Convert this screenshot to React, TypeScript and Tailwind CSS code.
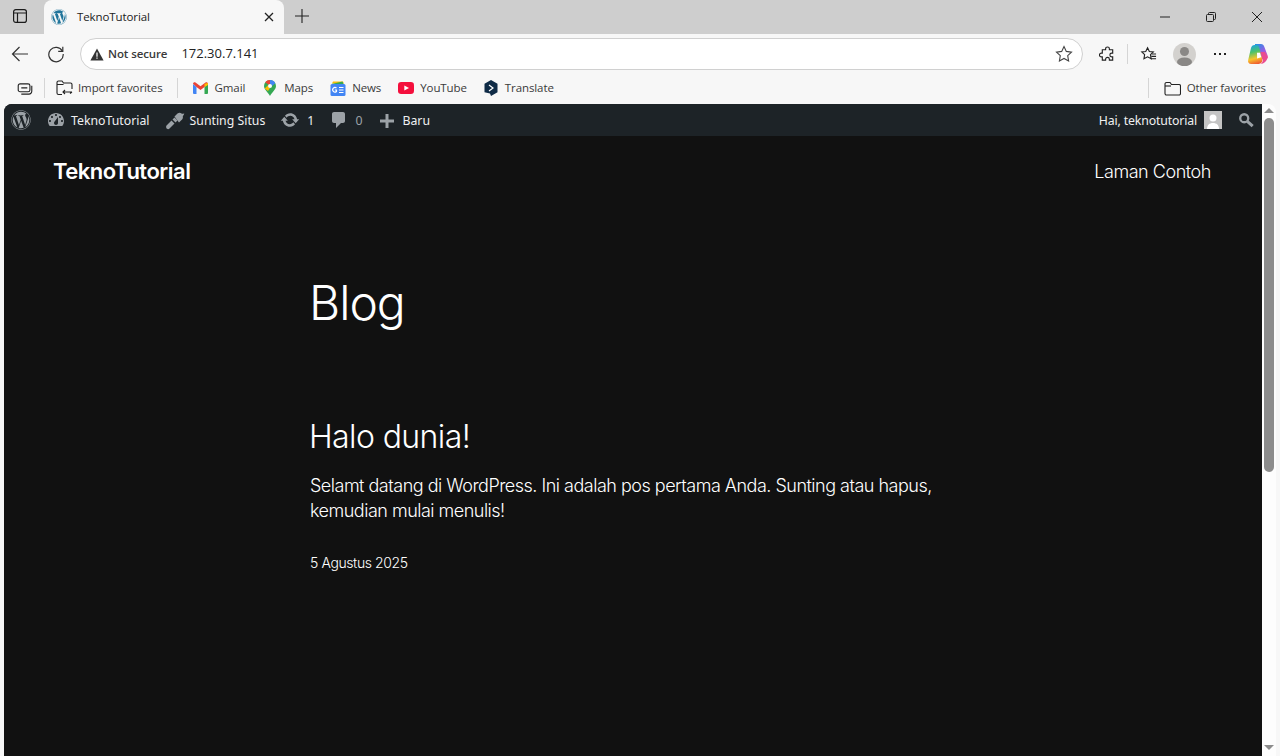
import { FaWordpress } from "react-icons/fa";

const chromeFont = "font-['Open_Sans','Noto_Sans',sans-serif]";

function Sidebar() {
  return (
    <svg viewBox="0 0 16 16" className="h-4 w-4" fill="none" stroke="#1b1b1b" strokeWidth="1.2">
      <rect x="1.6" y="1.6" width="12.8" height="12.8" rx="2.2" />
      <path d="M1.6 5h12.8M5.5 5v9.4" />
    </svg>
  );
}

function Bookmark({ icon, label, gap = "gap-[7px]" }: { icon: React.ReactNode; label: string; gap?: string }) {
  return (
    <div className={`flex items-center ${gap}`}>
      {icon}
      <span className="text-[11.5px] tracking-[-0.1px] text-[#3a3a3a]">{label}</span>
    </div>
  );
}

function TabStrip() {
  return (
    <div className="flex h-[34px] items-end bg-[#cecece]">
      <div className="flex h-[34px] w-[44px] items-center justify-center pb-[3px] pr-[4px]">
        <Sidebar />
      </div>
      <div className="flex h-[34px] w-[240px] items-center rounded-t-[8px] bg-[#f7f7f7] pl-[7px] pr-[10px]">
        <FaWordpress className="h-4 w-4 text-[#21759b]" />
        <span className="ml-[10px] flex-1 text-[11.5px] tracking-[-0.1px] text-[#222]">TeknoTutorial</span>
        <svg viewBox="0 0 10 10" className="h-[10px] w-[10px]" stroke="#222" strokeWidth="1.3">
          <path d="M1 1l8 8M9 1l-8 8" />
        </svg>
      </div>
      <div className="flex h-[34px] w-[36px] items-center justify-center pb-[3px]">
        <svg viewBox="0 0 14 14" className="h-[14px] w-[14px]" stroke="#222" strokeWidth="1.1">
          <path d="M7 0v14M0 7h14" />
        </svg>
      </div>
      <div className="flex-1" />
      <div className="flex h-[34px] items-center">
        <div className="flex w-[46px] justify-center">
          <svg viewBox="0 0 10 10" className="h-[10px] w-[10px]" stroke="#222" strokeWidth="1"><path d="M0 5h10" /></svg>
        </div>
        <div className="flex w-[46px] justify-center">
          <svg viewBox="0 0 10 10" className="h-[10px] w-[10px]" fill="none" stroke="#222" strokeWidth="1">
            <rect x="0.5" y="2.5" width="7" height="7" rx="1" />
            <path d="M2.5 2.5V1.5a1 1 0 011-1h5a1 1 0 011 1v5a1 1 0 01-1 1h-1" />
          </svg>
        </div>
        <div className="flex w-[46px] justify-center">
          <svg viewBox="0 0 10 10" className="h-[10px] w-[10px]" stroke="#222" strokeWidth="1"><path d="M0 0l10 10M10 0L0 10" /></svg>
        </div>
      </div>
    </div>
  );
}

function AddressRow() {
  return (
    <div className="flex h-[38px] items-center bg-[#f7f7f7] pt-[2px]">
      <div className="flex w-[40px] justify-center">
        <svg viewBox="0 0 18 18" className="h-[18px] w-[18px]" fill="none" stroke="#333" strokeWidth="1.2">
          <path d="M17 9H1.5M8.5 2l-7 7 7 7" />
        </svg>
      </div>
      <div className="flex w-[32px] justify-center">
        <svg viewBox="0 0 18 18" className="h-[18px] w-[18px]" fill="none" stroke="#333" strokeWidth="1.2">
          <path d="M15.4 6.2A7.2 7.2 0 1016.2 9" />
          <path d="M15.8 1.8v4.6h-4.6" />
        </svg>
      </div>
      <div className="ml-[8px] flex h-[32px] w-[1003px] items-center rounded-full border border-[#d0d0d0] bg-white pl-[9px] pr-[9px]">
        <svg viewBox="0 0 14 13" className="h-[13px] w-[14px]" fill="#333">
          <path d="M7 0.5L13.6 12.5H0.4z" />
          <path d="M6.4 4.5h1.2v4.2H6.4zM6.4 9.6h1.2v1.2H6.4z" fill="#fff" />
        </svg>
        <span className="ml-[4px] text-[11.5px] font-semibold tracking-[-0.1px] text-[#3a3a3a]">Not secure</span>
        <span className="ml-[14px] flex-1 text-[13px] text-[#222]">172.30.7.141</span>
        <svg viewBox="0 0 18 18" className="h-[18px] w-[18px]" fill="none" stroke="#444" strokeWidth="1.1">
          <path d="M9 1.6l2.3 4.8 5.2.7-3.8 3.6.9 5.2L9 13.4l-4.6 2.5.9-5.2L1.5 7.1l5.2-.7z" />
        </svg>
      </div>
      <div className="ml-[15px] flex w-[18px] justify-center">
        <svg viewBox="0 0 18 18" className="h-[17px] w-[17px]" fill="none" stroke="#222" strokeWidth="1.2">
          <path d="M7 3a2 2 0 014 0v1h3.500v3.500h-1a2 2 0 000 4h1V15H11v-1a2 2 0 00-4 0v1H3.500v-3.500h-1a2 2 0 010-4h1V4H7z" />
        </svg>
      </div>
      <div className="ml-[11px] h-[20px] w-px bg-[#d5d5d5]" />
      <div className="ml-[11px] flex w-[18px] justify-center">
        <svg viewBox="0 0 18 18" className="h-[17px] w-[17px]" fill="none" stroke="#222" strokeWidth="1.2">
          <path d="M8 1.800l1.900 4 4.200.5-3 2.900.7 4.200L8 11.400l-3.800 2 .7-4.200-3-2.900 4.200-.5z" />
          <path d="M12.500 8.500H17M12 11h5M11.500 13.500H17" />
        </svg>
      </div>
      <div className="ml-[16px] flex h-[23px] w-[23px] items-center justify-center overflow-hidden rounded-full bg-[#d3d1ce]">
        <svg viewBox="0 0 23 23" className="h-[23px] w-[23px]" fill="#8a8886">
          <circle cx="11.5" cy="8.5" r="4.5" />
          <ellipse cx="11.5" cy="19" rx="7.5" ry="4.5" />
        </svg>
      </div>
      <div className="ml-[18px] flex gap-[3px]">
        <span className="h-[2px] w-[2px] bg-[#222]" />
        <span className="h-[2px] w-[2px] bg-[#222]" />
        <span className="h-[2px] w-[2px] bg-[#222]" />
      </div>
      <div className="ml-[21px]">
        <svg viewBox="0 0 22 22" className="h-[22px] w-[22px]">
          <defs>
            <linearGradient id="cpA" x1="0.2" y1="0" x2="0.8" y2="1">
              <stop offset="0" stopColor="#2a8fe6" />
              <stop offset="0.55" stopColor="#9a5be2" />
              <stop offset="1" stopColor="#f04f9a" />
            </linearGradient>
            <linearGradient id="cpB" x1="0.4" y1="0" x2="0.6" y2="1">
              <stop offset="0" stopColor="#1fa6d8" />
              <stop offset="0.35" stopColor="#4cc36a" />
              <stop offset="0.7" stopColor="#f7c52b" />
              <stop offset="1" stopColor="#ef5a32" />
            </linearGradient>
          </defs>
          <path d="M8 1h6c1.700 0 2.700 1 3.200 2.400l3.600 9.600c.6 1.800-.6 3.300-2.300 3.300h-4.300L11.500 5C11 3 9.800 2.200 8 2.200z" fill="url(#cpA)" />
          <path d="M7.500 2h2.200c1.400 0 2.100 1 2.500 2.400l3 11.700c.6 2.500-1 4.900-3.700 4.900H4.200c-2.400 0-3.700-1.800-3-4L4 5c.6-2 1.700-3 3.500-3z" fill="url(#cpB)" />
          <path d="M13.500 21c2-1 2.600-3 2.100-4.700L13.600 9h4.200l2.700 5.500C20 18 17 21 13.500 21z" fill="#ea4c8f" />
          <path d="M10 9.800h3l1.300 4.500-4.200 1.200z" fill="#fff" />
        </svg>
      </div>
    </div>
  );
}

function BookmarkBar() {
  return (
    <div className="flex h-[32px] items-center bg-[#f7f7f7]">
      <div className="ml-[16px] flex w-[17px] justify-center">
        <svg viewBox="0 0 16 14" className="h-[13px] w-[16px]" fill="none" stroke="#222" strokeWidth="1.2">
          <rect x="0.7" y="2" width="12.6" height="8.500" rx="2" />
          <path d="M4 6.300h6.500M15.300 4v6a3 3 0 01-3 3H4" />
        </svg>
      </div>
      <div className="ml-[11px] h-[20px] w-px bg-[#d5d5d5]" />
      <div className="ml-[11px]">
        <Bookmark
          gap="gap-[5px]"
          label="Import favorites"
          icon={
            <svg viewBox="0 0 17 16" className="h-4 w-[17px]" fill="none" stroke="#222" strokeWidth="1.1">
              <path d="M6 14.500H2.500a1.500 1.500 0 01-1.500-1.500V2.500A1.500 1.500 0 012.500 1H6l1.500 2h7a1.500 1.500 0 011.500 1.500V9" />
              <path d="M1 4.500h6.500M7 12h9M9 10l-2 2 2 2M14 13.500l2-1.500" />
            </svg>
          }
        />
      </div>
      <div className="ml-[14px] h-[20px] w-px bg-[#d5d5d5]" />
      <div className="ml-[15px] flex items-center gap-[17px]">
        <Bookmark
          label="Gmail"
          icon={
            <svg viewBox="0 0 15 12" className="h-[12px] w-[15px]">
              <path d="M0 2v9a1 1 0 001 1h2.500V5z" fill="#4285f4" />
              <path d="M15 2v9a1 1 0 01-1 1h-2.500V5z" fill="#34a853" />
              <path d="M0 1.800C0 .5 1.500 -.3 2.500.5L7.500 4.300 12.500.5c1-.8 2.500 0 2.500 1.300L11.500 5 7.500 8 3.500 5z" fill="#ea4335" />
              <path d="M11.500 1.700L15 .9V3l-3.500 2z" fill="#fbbc04" />
            </svg>
          }
        />
        <div className="ml-[2px]">
          <Bookmark
            gap="gap-[8px]"
            label="Maps"
            icon={
              <svg viewBox="0 0 12 16" className="h-4 w-3">
                <path d="M6 0a6 6 0 016 6c0 3.500-3.700 5.800-6 10C3.700 11.800 0 9.500 0 6a6 6 0 016-6z" fill="#34a853" />
                <path d="M1.200 2.300A6 6 0 016 0v4a2 2 0 00-1.500.7z" fill="#ea4335" />
                <path d="M6 0a6 6 0 015.300 3.200L8 6a2 2 0 00-2-2z" fill="#4285f4" />
                <path d="M.7 8.500L4.500 4.700A2 2 0 006 8l-2 3z" fill="#fbbc04" />
                <circle cx="6" cy="6" r="2" fill="#fff" />
              </svg>
            }
          />
        </div>
        <Bookmark
          gap="gap-[6px]"
          label="News"
          icon={
            <svg viewBox="0 0 16 15" className="h-[15px] w-4">
              <path d="M2 2.500l1-2h10l1 2z" fill="#fbbc04" />
              <path d="M1.500 3l11-2.500 1 2.500z" fill="#34a853" />
              <rect x="0.500" y="3" width="15" height="12" rx="1.500" fill="#4285f4" />
              <path d="M9 6.500h4.500M9 9h4.500M9 11.500h4.500" stroke="#fff" strokeWidth="1.100" />
              <path d="M6.500 7a2.300 2.300 0 100 3.500V9H4.800" fill="none" stroke="#fff" strokeWidth="1.200" />
            </svg>
          }
        />
        <Bookmark
          gap="gap-[6px]"
          label="YouTube"
          icon={
            <svg viewBox="0 0 16 12" className="h-[12px] w-4">
              <rect width="16" height="12" rx="3.200" fill="#f40f3c" />
              <path d="M6.300 3.500L11 6l-4.700 2.500z" fill="#fff" />
            </svg>
          }
        />
        <Bookmark
          label="Translate"
          icon={
            <svg viewBox="0 0 14 16" className="h-4 w-[14px]">
              <path d="M7 0l6.500 3.700v8.600L7 16l-1-2.500-5.500-1.200V3.700z" fill="#0f2b46" />
              <path d="M5 5l4 3-4 3" fill="none" stroke="#fff" strokeWidth="1.200" />
            </svg>
          }
        />
      </div>
      <div className="flex-1" />
      <div className="h-[20px] w-px bg-[#d5d5d5]" />
      <div className="ml-[15px] mr-[14px]">
        <Bookmark
          gap="gap-[6px]"
          label="Other favorites"
          icon={
            <svg viewBox="0 0 17 15" className="h-[15px] w-[17px]" fill="none" stroke="#222" strokeWidth="1.1">
              <path d="M1 3a1.500 1.500 0 011.500-1.500H6L7.500 3.500H15A1.500 1.500 0 0116.500 5v7.500A1.500 1.500 0 0115 14H2.500A1.500 1.500 0 011 12.500z" />
              <path d="M1 5h6" />
            </svg>
          }
        />
      </div>
    </div>
  );
}

function AdminItem({ icon, label, dim }: { icon: React.ReactNode; label: string; dim?: boolean }) {
  return (
    <div className="flex h-8 items-center">
      {icon}
      <span className={dim ? "pt-[2px] text-[#9ca2a7]" : "pt-[2px] text-[#f0f0f1]"}>{label}</span>
    </div>
  );
}

function AdminBar() {
  return (
    <div className="flex h-8 shrink-0 items-center bg-[#1d2327] text-[12.3px] font-['Noto_Sans','Open_Sans',sans-serif]">
      <FaWordpress className="ml-[7px] h-5 w-5 text-[#9ca2a7]" />
      <div className="ml-[15px] flex items-center gap-[15px]">
        <AdminItem
          label="TeknoTutorial"
          icon={
            <svg viewBox="0 0 20 20" className="mr-[5px] h-5 w-5" fill="#9ca2a7" fillRule="evenodd">
              <path d="M3.760 16h12.480c1.100-1.370 1.760-3.110 1.760-5 0-4.420-3.580-8-8-8s-8 3.580-8 8c0 1.890.66 3.630 1.760 5zM10 4c.55 0 1 .45 1 1s-.45 1-1 1-1-.45-1-1 .45-1 1-1zM6 6c.55 0 1 .45 1 1s-.45 1-1 1-1-.45-1-1 .45-1 1-1zm8 0c.55 0 1 .45 1 1s-.45 1-1 1-1-.45-1-1 .45-1 1-1zm-5.370 5.550L12 7v6c0 1.100-.9 2-2 2s-2-.9-2-2c0-.57.24-1.080.63-1.450zM4 10c.55 0 1 .45 1 1s-.45 1-1 1-1-.45-1-1 .45-1 1-1zm12 0c.55 0 1 .45 1 1s-.45 1-1 1-1-.45-1-1 .45-1 1-1z" />
            </svg>
          }
        />
        <AdminItem
          label="Sunting Situs"
          icon={
            <svg viewBox="0 0 20 20" className="mr-[5px] h-5 w-5" fill="#9ca2a7">
              <path d="M1.500 15.500l5-5 3 3-5 5c-.8.8-1.700.8-2.500.3-.9-.7-1.200-2.300-.5-3.300z" />
              <path d="M7.500 9.500l2-2 3 3-2 2z" />
              <path d="M9.500 6.500L12.500 3.500c1.500-1 3-.8 4 0 .8.500 1.700.5 2.700-.3-.2 1.400-.6 2.200-1.400 2.800.2 1.300.2 2.300-.5 3.300l-3.300 3.200z" />
            </svg>
          }
        />
        <AdminItem
          label="1"
          icon={
            <svg viewBox="0 0 20 20" className="mr-[7px] h-5 w-5" fill="#9ca2a7">
              <path d="M10.200 3.280c3.530 0 6.430 2.610 6.900 6h2.080l-3.500 4-3.500-4h2.320c-.45-1.970-2.210-3.440-4.300-3.440-1.450 0-2.730.71-3.540 1.800L4.950 5.850c1.270-1.560 3.190-2.570 5.250-2.570zm-.4 13.440c-3.520 0-6.430-2.610-6.900-6H.82l3.500-4c1.170 1.330 2.330 2.670 3.500 4H5.500c.45 1.970 2.210 3.440 4.300 3.440 1.450 0 2.730-.71 3.540-1.800l1.710 1.950c-1.270 1.560-3.180 2.570-5.250 2.410z" />
            </svg>
          }
        />
        <AdminItem
          dim
          label="0"
          icon={
            <svg viewBox="0 0 20 20" className="mr-[6px] h-5 w-5" fill="#9ca2a7">
              <path d="M5 2h9c1.100 0 2 .9 2 2v7c0 1.100-.9 2-2 2h-2l-5 5v-5H5c-1.100 0-2-.9-2-2V4c0-1.100.9-2 2-2z" />
            </svg>
          }
        />
        <AdminItem
          label="Baru"
          icon={
            <svg viewBox="0 0 14 14" className="ml-[3px] mr-[8px] mt-[2px] h-[14px] w-[14px]" fill="#9ca2a7">
              <path d="M5.500 0h3v5.500H14v3H8.500V14h-3V8.500H0v-3h5.500z" />
            </svg>
          }
        />
      </div>
      <div className="flex-1" />
      <span className="pt-[2px] tracking-[-0.15px] text-[#f0f0f1]">Hai, teknotutorial</span>
      <div className="ml-[7px] flex h-[18px] w-[18px] items-end justify-center overflow-hidden bg-[#c4c4c4]">
        <svg viewBox="0 0 18 18" className="h-[18px] w-[18px]" fill="#fff">
          <circle cx="9" cy="7" r="3.500" />
          <path d="M3 18c0-4 2.500-6 6-6s6 2 6 6z" />
        </svg>
      </div>
      <svg viewBox="0 0 18 18" className="ml-[16px] mr-[8px] h-4 w-4" fill="none" stroke="#9ca2a7">
        <circle cx="7" cy="7" r="4.500" strokeWidth="2.600" />
        <path d="M10.500 10.500l6 5.500" strokeWidth="3.400" />
      </svg>
    </div>
  );
}

function Scrollbar() {
  return (
    <div className="flex w-[14px] shrink-0 flex-col items-center bg-[#fdfdfd]">
      <div className="mt-[4px] h-0 w-0 border-x-[5px] border-b-[5px] border-x-transparent border-b-[#8c8c8c]" />
      <div className="mt-[5px] h-[354px] w-[10px] rounded-full bg-[#8c8c8c]" />
      <div className="flex-1" />
      <div className="mb-[6px] h-0 w-0 border-x-[5px] border-t-[5px] border-x-transparent border-t-[#8c8c8c]" />
    </div>
  );
}

export default function App() {
  return (
    <div className={`flex h-[756px] w-[1280px] flex-col overflow-hidden bg-[#f7f7f7] ${chromeFont}`}>
      <TabStrip />
      <AddressRow />
      <BookmarkBar />
      <div className="flex min-h-0 flex-1 overflow-hidden rounded-t-[8px] ml-[4px] mr-[4px]">
        <div className="flex min-w-0 flex-1 flex-col bg-[#111111] text-white font-['Inter',sans-serif]">
          <AdminBar />
          <header className="flex items-center justify-between pl-[49px] pr-[51px] pt-[21px]">
            <span className="text-[22px] font-semibold leading-[29px] tracking-[-0.5px]">TeknoTutorial</span>
            <span className="text-[18px] font-[350] leading-[29px] tracking-[-0.45px]">Laman Contoh</span>
          </header>
          <main className="pl-[305px]">
            <h1 className="mt-[88px] text-[48px] font-light leading-[58px] tracking-[-1px]">Blog</h1>
            <h2 className="mt-[85px] text-[32px] font-light leading-[40px] tracking-[-0.6px]">Halo dunia!</h2>
            <p className="ml-[1px] mt-[16px] w-[660px] text-[18px] font-[350] leading-[25px] tracking-[-0.5px]">
              Selamt datang di WordPress. Ini adalah pos pertama Anda. Sunting atau hapus,
              <br />
              kemudian mulai menulis!
            </p>
            <p className="ml-[1px] mt-[30px] text-[14px] font-[350] leading-[20px] tracking-[-0.4px]">5 Agustus 2025</p>
          </main>
        </div>
        <Scrollbar />
      </div>
    </div>
  );
}
